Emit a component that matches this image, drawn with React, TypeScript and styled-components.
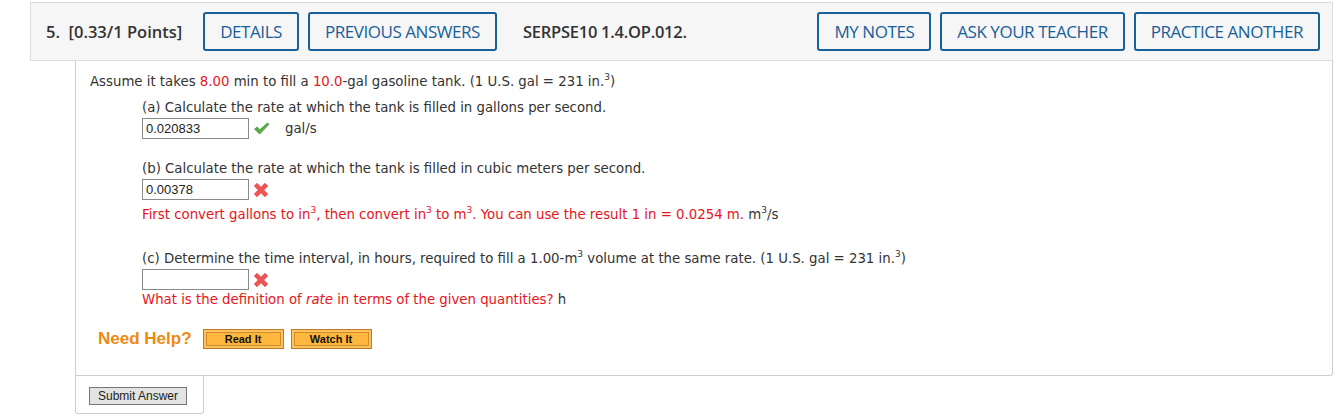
import React from "react";
import styled, { createGlobalStyle } from "styled-components";

const GlobalStyle = createGlobalStyle`
  body {
    margin: 0;
    background: #fff;
    font-family: "DejaVu Sans", Verdana, sans-serif;
  }
`;

const Page = styled.div`
  padding: 2px 7px 0 30px;
  width: 1303px;
`;

const Header = styled.div`
  height: 57px;
  display: flex;
  align-items: center;
  background: #f6f6f6;
  border: 1px solid #dedede;
  padding: 0 12px 0 15px;
  font-family: "Open Sans", sans-serif;
`;

const HeadText = styled.span<{ left?: number; right?: number; spacing?: number }>`
  font-weight: 600;
  font-size: 16.5px;
  color: #333;
  letter-spacing: ${(p) => p.spacing ?? 0}px;
  margin-left: ${(p) => p.left ?? 0}px;
  margin-right: ${(p) => p.right ?? 0}px;
  white-space: pre;
`;

const HeadButton = styled.button<{ gap?: number }>`
  height: 39px;
  padding: 0 15px;
  margin-right: ${(p) => p.gap ?? 9}px;
  background: transparent;
  border: 2px solid #17609a;
  border-radius: 3px;
  color: #17609a;
  font-family: inherit;
  font-size: 17px;
  font-weight: 500;
  letter-spacing: -0.45px;
  white-space: nowrap;
  cursor: pointer;
`;

const Spacer = styled.div`
  flex: 1;
`;

const Panel = styled.div`
  margin-left: 45px;
  border: 1px solid #cfcfcf;
  border-top: none;
  border-radius: 0 0 3px 0;
  padding: 13px 0 26px 14px;
  color: #333;
  font-size: 13.3px;
`;

const Line = styled.div`
  line-height: 16px;
  white-space: nowrap;
`;

const Red = styled.span`
  color: #e8141c;
`;

const Sup = styled.sup`
  font-size: 9px;
  line-height: 0;
  vertical-align: 6px;
`;

const Part = styled.div<{ top: number }>`
  padding-left: 52px;
  margin-top: ${(p) => p.top}px;
`;

const AnswerRow = styled.div`
  display: flex;
  align-items: center;
  height: 21px;
  margin-top: 2px;
`;

const Input = styled.input`
  box-sizing: border-box;
  width: 107px;
  height: 21px;
  border: 1px solid #8a8a8a;
  padding: 0 3px;
  font-family: "Liberation Sans", Arial, sans-serif;
  font-size: 13px;
  color: #222;
`;

const Mark = styled.span`
  display: inline-flex;
  margin-left: 4px;
  width: 19px;
  justify-content: flex-start;
`;

const Unit = styled.span`
  margin-left: 13px;
  color: #333;
`;

const Hint = styled.div<{ top: number }>`
  line-height: 16px;
  margin-top: ${(p) => p.top}px;
  color: #e8141c;
  white-space: nowrap;
`;

const Dark = styled.span`
  color: #333;
`;

const HelpRow = styled.div`
  display: flex;
  align-items: center;
  margin-top: 21px;
  margin-left: 8px;
  height: 20px;
  font-family: "Liberation Sans", Arial, sans-serif;
`;

const HelpLabel = styled.span`
  color: #ec8a14;
  font-weight: bold;
  font-size: 17px;
  margin-right: 11px;
`;

const HelpButton = styled.button`
  box-sizing: border-box;
  width: 81px;
  height: 20px;
  margin-right: 7px;
  padding: 0;
  border: 1px solid #c0782a;
  background: #ffb73d;
  box-shadow: inset 0 0 0 2px #ffc45a, inset 0 0 0 3px #d58a30;
  font-family: "Liberation Sans", Arial, sans-serif;
  font-weight: bold;
  font-size: 11px;
  color: #111;
  cursor: pointer;
`;

const SubmitTab = styled.div`
  margin-left: 45px;
  width: 114px;
  border: 1px solid #cfcfcf;
  border-top: none;
  border-radius: 0 0 3px 3px;
  padding: 11px 0 8px 13px;
`;

const SubmitButton = styled.button`
  display: block;
  height: 18px;
  padding: 0 8px;
  border: 1px solid #767676;
  background: #e3e3e3;
  font-family: "Liberation Sans", Arial, sans-serif;
  font-size: 12px;
  color: #222;
  line-height: 14px;
`;

const Check = () => (
  <svg width="17" height="13" viewBox="0 0 18 14">
    <path
      d="M1.5 7.5 L4.5 5.5 L7 8.5 L15.5 1 L17 2.5 L7 13 Z"
      fill="#5aae47"
      stroke="#3f8c33"
      strokeWidth="0.8"
      strokeLinejoin="round"
    />
  </svg>
);

const Cross = () => (
  <svg width="16" height="16" viewBox="1 1 12 12">
    <path
      d="M2 4 L4 2 L7 5 L10 2 L12 4 L9 7 L12 10 L10 12 L7 9 L4 12 L2 10 L5 7 Z"
      fill="#ef5555"
      stroke="#e04040"
      strokeWidth="0.6"
      strokeLinejoin="round"
    />
  </svg>
);

function App() {
  return (
    <Page>
      <GlobalStyle />
      <Header>
        <HeadText right={21}>5.  [0.33/1 Points]</HeadText>
        <HeadButton>DETAILS</HeadButton>
        <HeadButton>PREVIOUS ANSWERS</HeadButton>
        <HeadText left={17} spacing={-0.25}>
          SERPSE10 1.4.OP.012.
        </HeadText>
        <Spacer />
        <HeadButton>MY NOTES</HeadButton>
        <HeadButton>ASK YOUR TEACHER</HeadButton>
        <HeadButton gap={0}>PRACTICE ANOTHER</HeadButton>
      </Header>
      <Panel>
        <Line>
          Assume it takes <Red>8.00</Red> min to fill a <Red>10.0</Red>-gal
          gasoline tank. (1 U.S. gal = 231 in.<Sup>3</Sup>)
        </Line>
        <Part top={10}>
          <Line>(a) Calculate the rate at which the tank is filled in gallons per second.</Line>
          <AnswerRow>
            <Input defaultValue="0.020833" />
            <Mark>
              <Check />
            </Mark>
            <Unit>gal/s</Unit>
          </AnswerRow>
        </Part>
        <Part top={22}>
          <Line>(b) Calculate the rate at which the tank is filled in cubic meters per second.</Line>
          <AnswerRow>
            <Input defaultValue="0.00378" />
            <Mark>
              <Cross />
            </Mark>
          </AnswerRow>
          <Hint top={7}>
            First convert gallons to in<Sup>3</Sup>, then convert in<Sup>3</Sup> to m
            <Sup>3</Sup>. You can use the result 1 in = 0.0254 m.{" "}
            <Dark>
              m<Sup>3</Sup>/s
            </Dark>
          </Hint>
        </Part>
        <Part top={28}>
          <Line>
            (c) Determine the time interval, in hours, required to fill a 1.00-m
            <Sup>3</Sup> volume at the same rate. (1 U.S. gal = 231 in.<Sup>3</Sup>)
          </Line>
          <AnswerRow>
            <Input defaultValue="" />
            <Mark>
              <Cross />
            </Mark>
          </AnswerRow>
          <Hint top={2}>
            What is the definition of <i>rate</i> in terms of the given quantities?{" "}
            <Dark>h</Dark>
          </Hint>
        </Part>
        <HelpRow>
          <HelpLabel>Need Help?</HelpLabel>
          <HelpButton>Read It</HelpButton>
          <HelpButton>Watch It</HelpButton>
        </HelpRow>
      </Panel>
      <SubmitTab>
        <SubmitButton>Submit Answer</SubmitButton>
      </SubmitTab>
    </Page>
  );
}

export default App;
